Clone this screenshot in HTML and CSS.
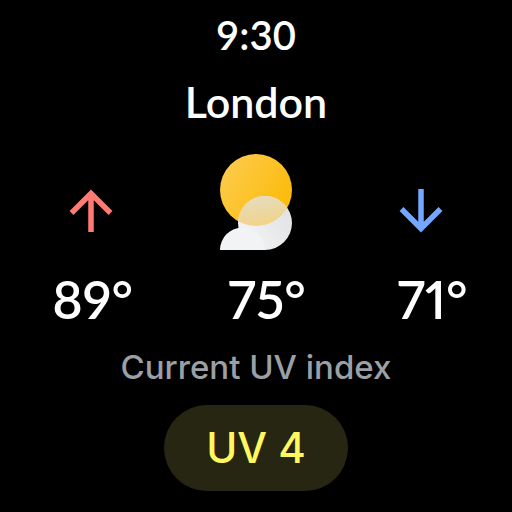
FILE: index.html
```html
<!DOCTYPE html>
<html lang="en">
<head>
<meta charset="utf-8">
<title>Weather</title>
<link rel="stylesheet" href="styles.css">
</head>
<body>
<main class="watch">
  <time class="clock">9:30</time>
  <h1 class="city">London</h1>
  <section class="temps">
    <div class="temp temp-high">
      <svg class="arrow" viewBox="0 0 44 44" fill="none" stroke="#ff7a72" stroke-width="5.500"><path d="M22 43V5M2.500 24 22 4.500l19.500 19.500"/></svg>
      <span class="value">89°</span>
    </div>
    <div class="temp">
      <svg class="sky" viewBox="0 0 74 98">
        <defs>
          <linearGradient id="sun" x1="0" y1="0.2" x2="1" y2="0.8"><stop offset="0" stop-color="#fdcb4d"/><stop offset="1" stop-color="#fbba04"/></linearGradient>
          <linearGradient id="cloud" x1="0.1" y1="0.7" x2="0.9" y2="0.3"><stop offset="0" stop-color="#f1f3f4"/><stop offset="1" stop-color="#e2e4e6"/></linearGradient>
          <linearGradient id="overlap" x1="0" y1="0" x2="0.1" y2="0.6"><stop offset="0.1" stop-color="#e5dcc0"/><stop offset="1" stop-color="#f2d388"/></linearGradient>
          <clipPath id="disc"><circle cx="37" cy="37" r="36"/></clipPath>
        </defs>
        <circle cx="37" cy="37" r="36" fill="url(#sun)"/>
        <circle cx="46" cy="70" r="27" fill="url(#cloud)"/>
        <circle cx="46" cy="70" r="27" fill="url(#overlap)" clip-path="url(#disc)"/>
        <path d="M1 97a22.500 22.500 0 0 1 45 0z" fill="#f1f3f4"/>
      </svg>
      <span class="value">75°</span>
    </div>
    <div class="temp">
      <svg class="arrow" viewBox="0 0 44 44" fill="none" stroke="#74a7ff" stroke-width="5.500"><path d="M22 0v39M2.500 20 22 39.500 41.500 20"/></svg>
      <span class="value">71°</span>
    </div>
  </section>
  <p class="label">Current UV index</p>
  <button class="uv" type="button">UV 4</button>
</main>
</body>
</html>
```
FILE: styles.css
```css
body {
  margin: 0;
  background: #000;
  color: #fff;
  font-family: Lato, "Open Sans", sans-serif;
  font-weight: 500;
}

.watch {
  display: flex;
  flex-direction: column;
  align-items: center;
  padding: 12px 8px 20px;
}

.clock {
  font-size: 40px;
  font-weight: 600;
  line-height: 46px;
}

.city {
  margin: 20px 0 27px;
  font-size: 43px;
  font-weight: 600;
  line-height: 48px;
}

.temps {
  display: flex;
  justify-content: space-between;
  align-self: stretch;
}

.temp {
  display: flex;
  flex: 1;
  flex-direction: column;
  align-items: center;
  justify-content: flex-end;
}

.arrow {
  width: 44px;
  height: 44px;
  margin-bottom: 18px;
}

.sky {
  width: 74px;
  height: 98px;
}

.value {
  margin-top: 18px;
  padding-left: 22px;
  font-size: 52px;
  font-weight: 600;
  font-variant-numeric: proportional-nums;
  line-height: 60px;
}

.temp-high .value {
  padding-left: 4px;
}

.label {
  margin: 20px 0;
  color: #9aa0a6;
  font-family: Inter, sans-serif;
  font-size: 33px;
  line-height: 36px;
}

.uv {
  padding: 0 42px;
  border: 0;
  border-radius: 44px;
  background: #272613;
  color: #fff95f;
  font-family: Inter, sans-serif;
  font-size: 42px;
  font-weight: 500;
  line-height: 86px;
}
```
